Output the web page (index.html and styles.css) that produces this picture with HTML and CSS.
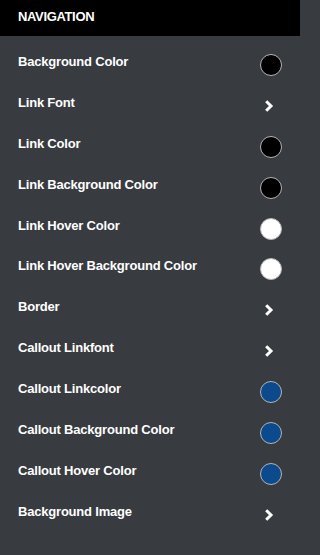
FILE: index.html
```html
<!DOCTYPE html>
<html>
<head>
<meta charset="utf-8">
<link rel="stylesheet" href="styles.css">
</head>
<body>
<div class="panel">
  <div class="header">NAVIGATION</div>
  <div class="list">
    <div class="row"><span class="label">Background Color</span><span class="swatch black"></span></div>
    <div class="row"><span class="label">Link Font</span><svg class="chev" viewBox="0 0 10 14"><polyline points="2.2,2.2 7,7 2.2,11.8"/></svg></div>
    <div class="row"><span class="label">Link Color</span><span class="swatch black"></span></div>
    <div class="row"><span class="label">Link Background Color</span><span class="swatch black"></span></div>
    <div class="row"><span class="label">Link Hover Color</span><span class="swatch white"></span></div>
    <div class="row"><span class="label">Link Hover Background Color</span><span class="swatch white"></span></div>
    <div class="row"><span class="label">Border</span><svg class="chev" viewBox="0 0 10 14"><polyline points="2.2,2.2 7,7 2.2,11.8"/></svg></div>
    <div class="row"><span class="label">Callout Linkfont</span><svg class="chev" viewBox="0 0 10 14"><polyline points="2.2,2.2 7,7 2.2,11.8"/></svg></div>
    <div class="row"><span class="label">Callout Linkcolor</span><span class="swatch blue"></span></div>
    <div class="row"><span class="label">Callout Background Color</span><span class="swatch blue"></span></div>
    <div class="row"><span class="label">Callout Hover Color</span><span class="swatch blue"></span></div>
    <div class="row"><span class="label">Background Image</span><svg class="chev" viewBox="0 0 10 14"><polyline points="2.2,2.2 7,7 2.2,11.8"/></svg></div>
  </div>
</div>
</body>
</html>
```

FILE: styles.css
```css
html, body {
  margin: 0;
  padding: 0;
  background: #383b3f;
  height: 100%;
}
.panel {
  width: 300px;
  min-height: 555px;
  background: #383b3f;
  font-family: "Liberation Sans", Arial, sans-serif;
  font-weight: bold;
  color: #ffffff;
}
.header {
  height: 36px;
  background: #000000;
  box-sizing: border-box;
  padding: 9px 0 0 18px;
  font-size: 13px;
  line-height: 15px;
  letter-spacing: -0.35px;
}
.list {
  padding-top: 18px;
}
.row {
  height: 40.9px;
  display: flex;
  justify-content: space-between;
  align-items: flex-start;
  padding: 0 18px 0 18px;
}
.label {
  font-size: 13px;
  line-height: 15px;
  letter-spacing: -0.2px;
}
.swatch {
  width: 22px;
  height: 22px;
  box-sizing: border-box;
  border-radius: 50%;
  border: 1px solid #b4b4b4;
}
.black { background: #000000; }
.white { background: #ffffff; }
.blue { background: #0b4a8c; }
.chev {
  width: 10px;
  height: 14px;
  margin-top: 4px;
  margin-right: 8px;
  overflow: visible;
}
.chev polyline {
  fill: none;
  stroke: #ffffff;
  stroke-width: 3;
  stroke-linecap: butt;
  stroke-linejoin: miter;
}
```
